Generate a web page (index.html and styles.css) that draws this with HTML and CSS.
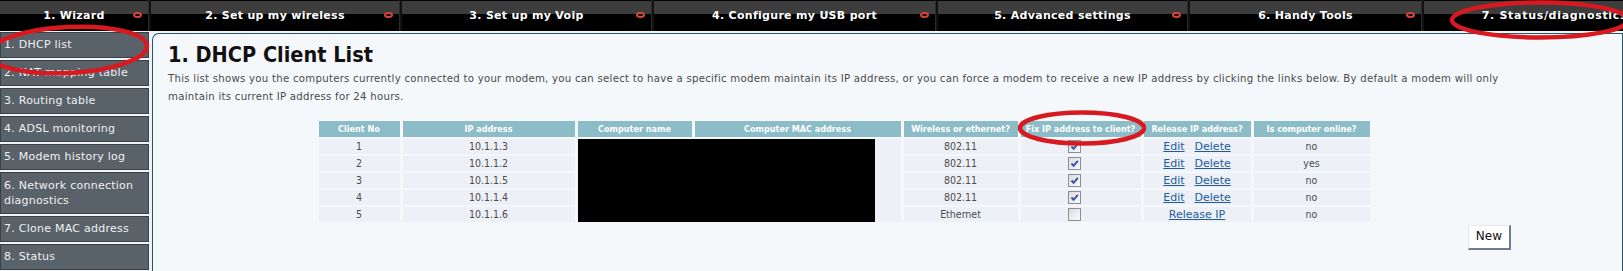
FILE: index.html
```html
<!DOCTYPE html>
<html lang="en">
<head>
  <meta charset="UTF-8" />
  <title>Status / diagnostics – DHCP Client List</title>
  <meta name="viewport" content="width=device-width, initial-scale=1" />
  <link rel="stylesheet" href="styles.css">
</head>
<body>
  <div class="tabs">
    <div class="tab tab-1">1. Wizard<span class="tab-dot"></span></div>
    <div class="tab tab-2">2. Set up my wireless<span class="tab-dot"></span></div>
    <div class="tab tab-3">3. Set up my Voip<span class="tab-dot"></span></div>
    <div class="tab tab-4">4. Configure my USB port<span class="tab-dot"></span></div>
    <div class="tab tab-5">5. Advanced settings<span class="tab-dot"></span></div>
    <div class="tab tab-6">6. Handy Tools<span class="tab-dot"></span></div>
    <div class="tab tab-7">7. Status/diagnostics<span class="tab-dot"></span></div>
  </div>
  <div class="page">
    <ul class="side-menu">
      <li>1. DHCP list</li>
      <li>2. NAT mapping table</li>
      <li>3. Routing table</li>
      <li>4. ADSL monitoring</li>
      <li>5. Modem history log</li>
      <li class="two-line">6. Network connection diagnostics</li>
      <li>7. Clone MAC address</li>
      <li>8. Status</li>
    </ul>
    <div class="main">
      <div class="main-inner">
        <h1>1. DHCP Client List</h1>
        <p class="intro">This list shows you the computers currently connected to your modem, you can select to have a specific modem maintain its IP address, or you can force a modem to receive a new IP address by clicking the links below. By default a modem will only maintain its current IP address for 24 hours.</p>
        <table class="clients">
          <tr>
            <th class="col-no">Client No</th>
            <th class="col-ip">IP address</th>
            <th class="col-name">Computer name</th>
            <th class="col-mac">Computer MAC address</th>
            <th class="col-type">Wireless or ethernet?</th>
            <th class="col-fix">Fix IP address to client?</th>
            <th class="col-rel">Release IP address?</th>
            <th class="col-online">Is computer online?</th>
          </tr>
          <tr>
            <td>1</td>
            <td>10.1.1.3</td>
            <td class="redacted" rowspan="5" colspan="2"><div class="black-box"></div></td>
            <td>802.11</td>
            <td><span class="check on"><svg viewBox="0 0 11 11" width="11" height="11"><path d="M2.5 5.5 L4.6 7.8 L8.8 2.8" /></svg></span></td>
            <td><a href="#">Edit</a><a href="#" class="link-gap">Delete</a></td>
            <td>no</td>
          </tr>
          <tr>
            <td>2</td>
            <td>10.1.1.2</td>
            <td>802.11</td>
            <td><span class="check on"><svg viewBox="0 0 11 11" width="11" height="11"><path d="M2.5 5.5 L4.6 7.8 L8.8 2.8" /></svg></span></td>
            <td><a href="#">Edit</a><a href="#" class="link-gap">Delete</a></td>
            <td>yes</td>
          </tr>
          <tr>
            <td>3</td>
            <td>10.1.1.5</td>
            <td>802.11</td>
            <td><span class="check on"><svg viewBox="0 0 11 11" width="11" height="11"><path d="M2.5 5.5 L4.6 7.8 L8.8 2.8" /></svg></span></td>
            <td><a href="#">Edit</a><a href="#" class="link-gap">Delete</a></td>
            <td>no</td>
          </tr>
          <tr>
            <td>4</td>
            <td>10.1.1.4</td>
            <td>802.11</td>
            <td><span class="check on"><svg viewBox="0 0 11 11" width="11" height="11"><path d="M2.5 5.5 L4.6 7.8 L8.8 2.8" /></svg></span></td>
            <td><a href="#">Edit</a><a href="#" class="link-gap">Delete</a></td>
            <td>no</td>
          </tr>
          <tr>
            <td>5</td>
            <td>10.1.1.6</td>
            <td>Ethernet</td>
            <td><span class="check"></span></td>
            <td><a href="#">Release IP</a></td>
            <td>no</td>
          </tr>
        </table>
        <div class="actions">
          <button class="btn">New</button>
        </div>
      </div>
    </div>
  </div>
  <!-- red marker circles drawn over the screen -->
  <svg class="marks" width="1623" height="271" viewBox="0 0 1623 271">
    <ellipse cx="68" cy="50" rx="79" ry="23" transform="rotate(-3 68 50)" />
    <ellipse cx="1082" cy="128" rx="62" ry="15.5" />
    <ellipse cx="1540" cy="20" rx="88" ry="17.5" />
  </svg>
</body>
</html>
```

FILE: styles.css
```css
html, body {
  margin: 0;
  padding: 0;
  overflow: hidden;
}
body {
  width: 1623px;
  height: 271px;
  background: #f0f3f5;
  font-family: 'DejaVu Sans', Verdana, sans-serif;
  position: relative;
}

/* top menu */
.tabs {
  display: flex;
  gap: 2px;
  height: 31px;
  background: #111;
  overflow: hidden;
}
.tab {
  position: relative;
  flex: 0 0 auto;
  height: 31px;
  line-height: 31px;
  text-align: center;
  color: #fff;
  font-weight: bold;
  font-size: 11px;
  letter-spacing: 0.3px;
  white-space: nowrap;
  background: linear-gradient(#000 0, #000 1px, #3d3d3d 1px, #3d3d3d 14px, #000 14px);
  border-right: 1px solid #2b2b2b;
  box-sizing: border-box;
}
.tab-1 { width: 149px; }
.tab-2 { width: 249px; }
.tab-3 { width: 250px; }
.tab-4 { width: 282px; }
.tab-5 { width: 250px; }
.tab-6 { width: 232px; }
.tab-7 { width: 262px; letter-spacing: 0.7px; }
.tab-dot {
  position: absolute;
  right: 6px;
  top: 12px;
  width: 9px;
  height: 6px;
  box-sizing: border-box;
  border: 2px solid #d8453a;
  border-radius: 50%;
}

/* page */
.page {
  display: flex;
  align-items: flex-start;
}
.side-menu {
  list-style: none;
  margin: 1px 0 0 0;
  padding: 0;
  width: 149px;
  flex: 0 0 149px;
}
.side-menu li {
  background: #5a6269;
  border: 1px solid #3a4146;
  color: #eef0f2;
  font-size: 11px;
  letter-spacing: 0.25px;
  line-height: 14px;
  padding: 5px 3px;
  margin-bottom: 2px;
}
.side-menu li.two-line {
  line-height: 15px;
}

.main {
  flex: 1;
  margin: 2px 0 0 3px;
  height: 238px;
  box-sizing: border-box;
  background: #f5f8fb;
  border: 1px solid #2c5563;
  border-bottom: 0;
  border-top-left-radius: 7px;
  padding: 8px 0 0 15px;
  overflow: hidden;
}
.main-inner {
  width: 1352px;
}
h1 {
  margin: 0;
  font-family: 'DejaVu Sans Condensed', 'DejaVu Sans', sans-serif;
  font-size: 21.5px;
  line-height: 26px;
  color: #111;
}
.intro {
  margin: 2px 0 0 0;
  font-family: 'DejaVu Sans Condensed', 'DejaVu Sans', sans-serif;
  font-size: 11.3px;
  letter-spacing: 0.26px;
  line-height: 18px;
  color: #4a4a4a;
}

/* client table */
.clients {
  margin: 13px auto 0 auto;
  border-collapse: separate;
  border-spacing: 3px 2px;
  table-layout: fixed;
  font-family: 'DejaVu Sans Condensed', 'DejaVu Sans', sans-serif;
}
.clients th {
  background: #8cbcc8;
  color: #fff;
  font-size: 9px;
  font-weight: bold;
  height: 16px;
  padding: 0;
  white-space: nowrap;
  overflow: hidden;
}
.clients td {
  background: #edf1f7;
  color: #4b4b4b;
  font-size: 10.5px;
  height: 15px;
  line-height: 15px;
  padding: 0;
  text-align: center;
}
.col-no { width: 81px; }
.col-ip { width: 172px; }
.col-name { width: 114px; }
.col-mac { width: 206px; }
.col-type { width: 114px; }
.col-fix { width: 120px; }
.col-rel { width: 107px; }
.col-online { width: 116px; }

.clients td.redacted {
  vertical-align: top;
  text-align: left;
  height: auto;
}
.black-box {
  width: 297px;
  height: 83px;
  background: #000;
}

.clients a {
  font-family: 'DejaVu Sans', Verdana, sans-serif;
  font-size: 11px;
  color: #1f5b9b;
  text-decoration: underline;
}
.clients a.link-gap {
  margin-left: 10px;
}

.check {
  display: inline-block;
  vertical-align: middle;
  width: 13px;
  height: 13px;
  box-sizing: border-box;
  margin: -2px 13px 0 0;
  border: 1px solid #8b9097;
  background: linear-gradient(135deg, #dcdcdc, #fbfbfb);
  position: relative;
}
.check svg {
  display: block;
  fill: none;
  stroke: #3b4fae;
  stroke-width: 2;
}

.actions {
  display: flex;
  justify-content: flex-end;
  padding-right: 9px;
  margin-top: 1px;
}
.btn {
  font-family: 'DejaVu Sans', Verdana, sans-serif;
  font-size: 12px;
  color: #111;
  background: #fff;
  border-style: solid;
  border-width: 1px 2px 2px 1px;
  border-color: #dfe7ef #6c7d8f #6c7d8f #dfe7ef;
  padding: 3px 7px 4px 7px;
  line-height: 15px;
}

/* red markers over the screenshot */
.marks {
  position: absolute;
  top: 0;
  left: 0;
  pointer-events: none;
}
.marks ellipse {
  fill: none;
  stroke: #d8191f;
  stroke-width: 4.5;
}
```
